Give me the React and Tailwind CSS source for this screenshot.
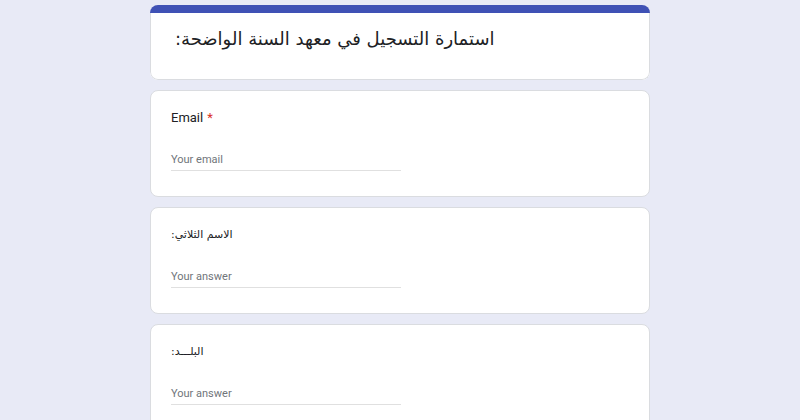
import React from 'react';

const questions = [
  { label: 'Email', required: true, placeholder: 'Your email', arabic: false },
  { label: 'الاسم الثلاثي:', placeholder: 'Your answer', arabic: true },
  { label: 'البلـــد:', placeholder: 'Your answer', arabic: true },
];

function QuestionCard({ q }) {
  return (
    <div className="bg-white rounded-lg border border-[#dadce0] px-5 pt-[16px] pb-[25px]">
      <div className="h-[22px] flex items-center text-[13px] text-[#202124]">
        {q.arabic ? (
          <span dir="rtl" className="text-[11px]" style={{ fontFamily: '"DejaVu Sans", sans-serif' }}>
            {q.label}
          </span>
        ) : (
          <span>
            {q.label}
            {q.required && <span className="text-[#d93025] ml-1">*</span>}
          </span>
        )}
      </div>
      <div className="mt-[18px] w-[230px] border-b border-[#e0e0e0] h-[24px] flex items-end pb-[2px] text-[11px] text-[#70757a]">
        {q.placeholder}
      </div>
    </div>
  );
}

export default function App() {
  return (
    <div className="min-h-[420px] bg-[#e8eaf6] pt-[5px]" style={{ fontFamily: 'Roboto, "Liberation Sans", sans-serif' }}>
      <div className="w-[500px] mx-auto flex flex-col gap-[10px]">
        <div className="bg-white rounded-lg border-t-[8px] border-[#3f51b5] overflow-hidden">
          <div className="px-6 pt-[10px] pb-[26px] border-x border-b border-[#dadce0] rounded-b-lg">
            <div className="h-[30px] flex items-center">
              <span dir="rtl" className="text-[18px] text-[#202124]" style={{ fontFamily: '"DejaVu Sans", sans-serif' }}>
                استمارة التسجيل في معهد السنة الواضحة:
              </span>
            </div>
          </div>
        </div>
        {questions.map((q, i) => (
          <QuestionCard key={i} q={q} />
        ))}
      </div>
    </div>
  );
}
